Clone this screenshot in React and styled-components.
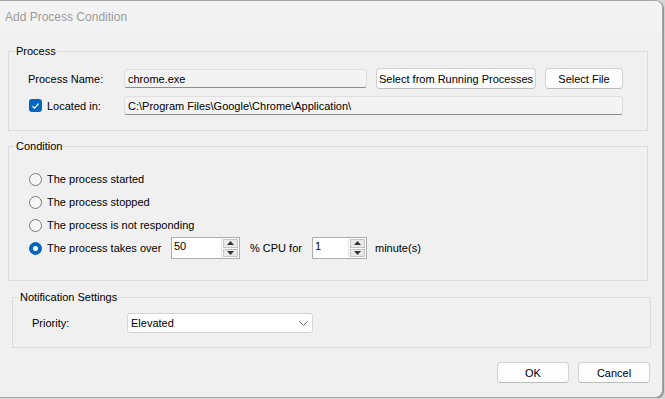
import React from 'react'
import styled, { createGlobalStyle } from 'styled-components'

const Global = createGlobalStyle`
    html, body {
        margin: 0;
        padding: 0;
        background: #d6d6d6;
    }
    body {
        font-family: "Liberation Sans", Arial, sans-serif;
        font-size: 11px;
        color: #000;
    }
`;

const Window = styled.div`
    width: 662px;
    height: 396px;
    background: #f0f0f0;
    border: 1px solid #a8a8a8;
    border-left: none;
    border-radius: 0 8px 8px 0;
    box-shadow: 1px 1px 1px rgba(0, 0, 0, 0.35);
    display: flex;
    flex-direction: column;
    overflow: hidden;
`;

const TitleBar = styled.div`
    height: 31px;
    flex: none;
    background: #f3f3f3;
    display: flex;
    align-items: center;
    padding-left: 5px;
    font-size: 12px;
    color: #9b9b9b;
`;

const Body = styled.div`
    display: flex;
    flex-direction: column;
    padding: 12px 14px 0 8px;
`;

const Group = styled.fieldset`
    margin: ${p => p.$top || 0}px 0 0 ${p => p.$shift || 0}px;
    width: ${p => p.$width || 640}px;
    box-sizing: border-box;
    border: 1px solid #dcdcdc;
    padding: 0;
    min-width: 0;
`;

const GroupBody = styled.div`
    padding: ${p => p.$pad};
`;

const Legend = styled.legend`
    margin-left: 6px;
    padding: 0 1px;
    line-height: 14px;
    font-size: 11px;
`;

const Row = styled.div`
    display: flex;
    align-items: center;
    height: ${p => p.$h || 21}px;
    margin-top: ${p => p.$gap || 0}px;
`;

const Label = styled.div`
    width: ${p => p.$w}px;
    flex: none;
    display: flex;
    align-items: center;
`;

const TextBox = styled.div`
    width: ${p => p.$w}px;
    height: 19px;
    box-sizing: border-box;
    background: #f3f3f3;
    border: 1px solid #dfdfdf;
    border-bottom-color: #8c8c8c;
    border-radius: 3px;
    display: flex;
    align-items: center;
    padding-left: 3px;
    flex: none;
`;

const Button = styled.button`
    width: ${p => p.$w}px;
    height: 21px;
    margin-left: ${p => p.$ml || 0}px;
    flex: none;
    background: #fdfdfd;
    border: 1px solid #d2d2d2;
    border-bottom-color: #bdbdbd;
    border-radius: 4px;
    font-family: "Liberation Sans", Arial, sans-serif;
    font-size: 11px;
    color: #000;
    padding: 0;
`;

const Check = styled.span`
    width: 13px;
    height: 13px;
    border-radius: 3px;
    background: #0067c0;
    display: inline-flex;
    align-items: center;
    justify-content: center;
    margin: 0 5px 0 1px;
    flex: none;
`;

const Radio = styled.span`
    width: 13px;
    height: 13px;
    box-sizing: border-box;
    border-radius: 50%;
    flex: none;
    margin: 0 5px 0 1px;
    display: inline-flex;
    align-items: center;
    justify-content: center;
    background: ${p => (p.$on ? '#0067c0' : '#f6f6f6')};
    border: 1px solid ${p => (p.$on ? '#0067c0' : '#7a7a7a')};
    &::after {
        content: '';
        display: ${p => (p.$on ? 'block' : 'none')};
        width: 5px;
        height: 5px;
        border-radius: 50%;
        background: #fff;
    }
`;

const Spin = styled.div`
    width: ${p => p.$w}px;
    height: 22px;
    box-sizing: border-box;
    border: 1px solid #adadad;
    background: #fff;
    display: flex;
    flex: none;
`;

const SpinValue = styled.div`
    flex: 1;
    padding: 2px 0 0 2px;
`;

const SpinButtons = styled.div`
    width: 15px;
    display: flex;
    flex-direction: column;
    border-left: 1px solid #e3e3e3;
    padding: 1px;
    gap: 1px;
`;

const SpinArrow = styled.div`
    flex: 1;
    background: #e9e9e9;
    border: 1px solid #c4c4c4;
    display: flex;
    align-items: center;
    justify-content: center;
`;

const Inline = styled.span`
    margin: 0 ${p => p.$mr || 0}px 0 ${p => p.$ml || 0}px;
`;

const Select = styled.div`
    width: 186px;
    height: 20px;
    box-sizing: border-box;
    background: #fff;
    border: 1px solid #d4d4d4;
    border-radius: 3px;
    display: flex;
    align-items: center;
    justify-content: space-between;
    padding: 0 4px 0 3px;
`;

const Footer = styled.div`
    display: flex;
    justify-content: flex-end;
    margin-top: 14px;
    width: 642px;
`;

const Arrow = ({ up }) => (
    <svg width="7" height="4" viewBox="0 0 7 4">
        <path d={up ? 'M0 4 L3.5 0 L7 4 Z' : 'M0 0 L3.5 4 L7 0 Z'} fill="#333" />
    </svg>
);

const SpinBox = ({ w, value }) => (
    <Spin $w={w}>
        <SpinValue>{value}</SpinValue>
        <SpinButtons>
            <SpinArrow><Arrow up /></SpinArrow>
            <SpinArrow><Arrow /></SpinArrow>
        </SpinButtons>
    </Spin>
);

const App = () => {
    return (
        <>
            <Global />
            <Window>
                <TitleBar>Add Process Condition</TitleBar>
                <Body>
                    <Group>
                        <Legend>Process</Legend>
                        <GroupBody $pad="10px 0 14px 19px">
                            <Row>
                                <Label $w={96}>Process Name:</Label>
                                <TextBox $w={243}>chrome.exe</TextBox>
                                <Button $w={160} $ml={9}>Select from Running Processes</Button>
                                <Button $w={78} $ml={9}>Select File</Button>
                            </Row>
                            <Row $gap={6}>
                                <Label $w={96}>
                                    <Check>
                                        <svg width="9" height="8" viewBox="0 0 9 8">
                                            <path d="M1.5 4.2 L3.6 6.2 L7.6 1.6" fill="none" stroke="#fff" strokeWidth="1.2" />
                                        </svg>
                                    </Check>
                                    Located in:
                                </Label>
                                <TextBox $w={499}>C:\Program Files\Google\Chrome\Application\</TextBox>
                            </Row>
                        </GroupBody>
                    </Group>

                    <Group $top={8}>
                        <Legend>Condition</Legend>
                        <GroupBody $pad="15px 0 21px 19px">
                            <Row $h={22}>
                                <Radio />The process started
                            </Row>
                            <Row $h={22} $gap={1}>
                                <Radio />The process stopped
                            </Row>
                            <Row $h={22} $gap={1}>
                                <Radio />The process is not responding
                            </Row>
                            <Row $h={22} $gap={1}>
                                <Label $w={143}>
                                    <Radio $on />The process takes over
                                </Label>
                                <SpinBox w={69} value="50" />
                                <Inline $ml={10} $mr={10}>% CPU for</Inline>
                                <SpinBox w={55} value="1" />
                                <Inline $ml={8}>minute(s)</Inline>
                            </Row>
                        </GroupBody>
                    </Group>

                    <Group $top={9} $shift={4} $width={639}>
                        <Legend>Notification Settings</Legend>
                        <GroupBody $pad="9px 0 14px 19px">
                            <Row $h={20}>
                                <Label $w={95}>Priority:</Label>
                                <Select>
                                    Elevated
                                    <svg width="9" height="5" viewBox="0 0 9 5">
                                        <path d="M0.5 0.5 L4.5 4.5 L8.5 0.5" fill="none" stroke="#6a6a6a" strokeWidth="1" />
                                    </svg>
                                </Select>
                            </Row>
                        </GroupBody>
                    </Group>

                    <Footer>
                        <Button $w={72}>OK</Button>
                        <Button $w={72} $ml={9}>Cancel</Button>
                    </Footer>
                </Body>
            </Window>
        </>
    )
}

export default App
